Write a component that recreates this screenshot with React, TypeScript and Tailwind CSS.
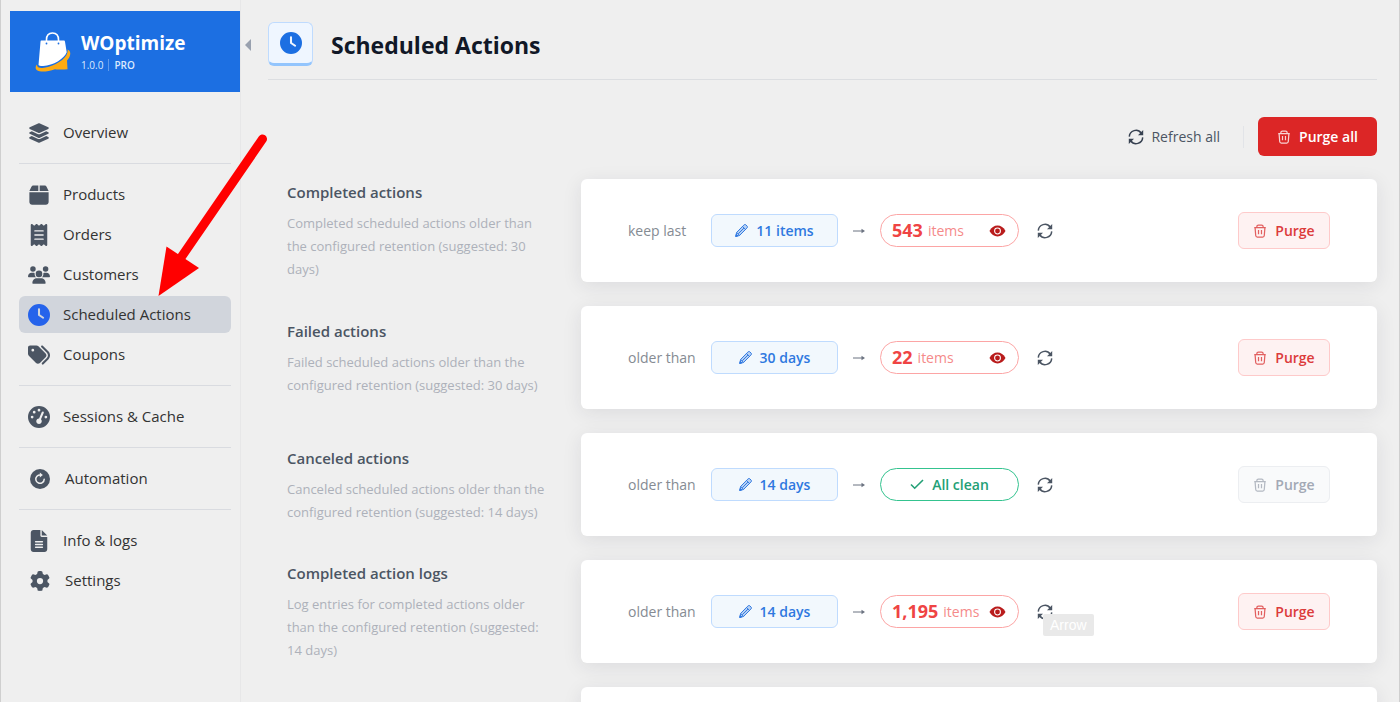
import React from "react";
import { FaBox, FaClock, FaFileLines, FaGaugeHigh, FaGear, FaLayerGroup, FaReceipt, FaTags, FaUsers } from "react-icons/fa6";

type IconProps = { className?: string };

function RefreshIcon({ className }: IconProps) {
  return (
    <svg viewBox="0 0 16 16" fill="none" stroke="currentColor" strokeWidth="1.5" className={className} aria-hidden="true">
      <path d="M1.3 7.6A6.600 6.600 0 0 1 13.300 4.200M14.700 8.400A6.600 6.600 0 0 1 2.700 11.800" />
      <path d="M15.200 1v5.200H10zM.8 15V9.800H6z" fill="currentColor" stroke="none" />
    </svg>
  );
}

function TrashIcon({ className }: IconProps) {
  return (
    <svg viewBox="0 0 16 16" fill="none" stroke="currentColor" strokeWidth="1.4" strokeLinejoin="round" className={className} aria-hidden="true">
      <path d="M1.4 4.2h13.2M4.400 4V3C4.400 2 5.200 1.300 6.200 1.300h3.600c1 0 1.800.7 1.800 1.700v1M2.400 4.400l.7 8.800c.1 1 .8 1.700 1.800 1.700h6.200c1 0 1.700-.7 1.800-1.700l.7-8.800M6.300 6.800v5M9.700 6.800v5" />
    </svg>
  );
}

function PencilIcon({ className }: IconProps) {
  return (
    <svg viewBox="0 0 16 16" fill="none" stroke="currentColor" strokeWidth="1.2" strokeLinejoin="round" className={className} aria-hidden="true">
      <path d="M10 2.200 11.400.9c.6-.5 1.400-.4 1.900.1l1.700 1.700c.5.5.5 1.300 0 1.900l-1.300 1.400-8.200 8.200L.9 15.300 2 10.400z" fill="currentColor" fillOpacity="0.3" />
      <path d="m9.200 3 3.900 3.900M2.100 10.400l3.500 3.700M11 5 4 12" />
      <path d="m.9 15.300.7-2.600 1.900 1.900z" fill="currentColor" />
    </svg>
  );
}

function EyeIcon({ className }: IconProps) {
  return (
    <svg viewBox="0 0 18 12" className={className} aria-hidden="true">
      <path d="M0.500 6C2.500 2.300 5.500.3 9 .3s6.500 2 8.500 5.700c-2 3.700-5 5.700-8.500 5.700S2.500 9.700.5 6z" fill="currentColor" />
      <circle cx="9" cy="6" r="3.100" fill="none" stroke="#fff" strokeWidth="1.100" />
    </svg>
  );
}

function CheckIcon({ className }: IconProps) {
  return (
    <svg viewBox="0 0 14 14" fill="none" stroke="currentColor" strokeWidth="1.600" className={className} aria-hidden="true">
      <path d="m1 6.500 3.700 3.700L13 2" />
    </svg>
  );
}

function AutomationIcon({ className }: IconProps) {
  return (
    <svg viewBox="0 0 20 20" className={className} aria-hidden="true">
      <circle cx="10" cy="10" r="10" fill="currentColor" />
      <path d="M6.900 7.300a4.200 4.200 0 1 0 7.300 2.900M7 7.200c.8-.8 1.800-1.200 3-1.200" fill="none" stroke="#efefef" strokeWidth="1.500" strokeLinecap="round" />
      <path d="M9.800 3.600 12.900 6 9.800 8.500z" fill="#efefef" />
    </svg>
  );
}

function Logo({ className }: IconProps) {
  return (
    <svg viewBox="0 0 36 40" className={className} aria-hidden="true">
      <path d="M32.500 17.500c4 1.500 3.500 6.500-.5 11l.5 8.700c-4.500.5-9.500.4-12.500 0-7 2.500-14.500 3-17.500 1.300C0 37.500.2 34.500 2 32.500c-.3 2.500 2 3.600 5.500 3.400C15 35.500 27.500 30 31.500 23c1-2 1.500-4 1-5.500z" fill="#fdab13" />
      <path d="M6.300 8.500h22.400c.8 0 1.200.4 1.300 1.200l1.700 10.500c-2.500 6.500-13.500 13.300-23.500 13.800-2.500.1-4-.2-4.700-1l2-23.300c0-.8.300-1.200.8-1.200z" fill="#fff" />
      <path d="M11.500 10.500V7.800C11.500 3.500 14 1 17.500 1S23.500 3.500 23.500 7.800v2.700" fill="none" stroke="#fff" strokeWidth="1.600" />
      <circle cx="11.500" cy="11.500" r=".9" fill="#1c6fe2" />
      <circle cx="23.500" cy="11.500" r=".9" fill="#1c6fe2" />
    </svg>
  );
}

type NavItem = { label: string; icon: React.ComponentType<IconProps>; small?: boolean; active?: boolean };

const navGroups: NavItem[][] = [
  [{ label: "Overview", icon: FaLayerGroup }],
  [
    { label: "Products", icon: FaBox },
    { label: "Orders", icon: FaReceipt },
    { label: "Customers", icon: FaUsers },
    { label: "Scheduled Actions", icon: FaClock, active: true },
    { label: "Coupons", icon: FaTags },
  ],
  [{ label: "Sessions & Cache", icon: FaGaugeHigh }],
  [{ label: "Automation", icon: AutomationIcon, small: true }],
  [
    { label: "Info & logs", icon: FaFileLines },
    { label: "Settings", icon: FaGear, small: true },
  ],
];

function Sidebar() {
  return (
    <aside className="relative w-[240px] shrink-0 border-r border-[#e7e7e8] pt-[11px]">
      <div className="ml-[9px] flex h-[81px] items-center bg-[#1c6fe2] pl-[25px] text-white">
        <Logo className="h-10 w-9 shrink-0" />
        <div className="pt-[2px] pl-[10px]">
          <div className="text-[19px] leading-6 font-bold">WOptimize</div>
          <div className="flex items-center text-[10px] leading-5 text-blue-100">
            <span>1.0.0</span>
            <span className="mx-[5px] h-3 w-px bg-white/30" />
            <span className="font-semibold">PRO</span>
          </div>
        </div>
      </div>
      <button type="button" aria-label="Collapse menu" className="absolute top-[39px] -right-[11px] text-gray-400">
        <svg viewBox="0 0 6 12" className="h-3 w-[6px]" aria-hidden="true">
          <path d="M6 0v12L0 6z" fill="currentColor" />
        </svg>
      </button>
      <nav className="mr-[9px] ml-[18px] pt-[22px]">
        {navGroups.map((group, i) => (
          <ul key={i} className={i === 0 ? "flex flex-col gap-[3px]" : "mt-3 flex flex-col gap-[3px] border-t border-[#d9dbe0] pt-3"}>
            {group.map(({ label, icon: Icon, small, active }) => (
              <li key={label}>
                <a
                  href="#"
                  className={
                    active
                      ? "flex h-[37px] items-center rounded-md bg-[#d1d5dc] pl-[9px] text-[15px] text-[#333]"
                      : "flex h-[37px] items-center rounded-md pl-[9px] text-[15px] text-[#333]"
                  }
                >
                  <Icon
                    className={
                      active
                        ? "mr-[13px] size-[22px] text-[#2563eb]"
                        : small
                          ? "mr-[15px] ml-[2px] size-[20px] text-[#4b5563]"
                          : "mr-[13px] size-[22px] text-[#4b5563]"
                    }
                  />
                  {label}
                </a>
              </li>
            ))}
          </ul>
        ))}
      </nav>
    </aside>
  );
}

type Row = { title: string; text: string; rule: string; value: string; count: string | null; tip?: string };

const rows: Row[] = [
  {
    title: "Completed actions",
    text: "Completed scheduled actions older than the configured retention (suggested: 30 days)",
    rule: "keep last",
    value: "11 items",
    count: "543",
  },
  {
    title: "Failed actions",
    text: "Failed scheduled actions older than the configured retention (suggested: 30 days)",
    rule: "older than",
    value: "30 days",
    count: "22",
  },
  {
    title: "Canceled actions",
    text: "Canceled scheduled actions older than the configured retention (suggested: 14 days)",
    rule: "older than",
    value: "14 days",
    count: null,
  },
  {
    title: "Completed action logs",
    text: "Log entries for completed actions older than the configured retention (suggested: 14 days)",
    rule: "older than",
    value: "14 days",
    count: "1,195",
    tip: "Arrow",
  },
];

const cardClass =
  "flex h-[103px] min-w-0 flex-1 items-center rounded-md bg-white pr-[47px] pl-[47px] shadow-[0_4px_20px_rgba(30,35,50,0.09)]";

function ActionRow({ row }: { row: Row }) {
  return (
    <section className="flex items-center">
      <div className="w-[313px] shrink-0 pr-[33px] pl-[19px]">
        <h2 className="text-[15px] leading-6 font-semibold text-[#4b5563]">{row.title}</h2>
        <p className="mt-2 text-[13px] leading-[23px] text-[#adb1ba]">{row.text}</p>
      </div>
      <div className={cardClass}>
        <span className="w-[83px] shrink-0 text-[14px] text-[#858b93]">{row.rule}</span>
        <button
          type="button"
          className="flex h-[33px] w-[127px] shrink-0 items-center justify-center gap-2 rounded-md border border-[#bfdbfe] bg-[#f2f8fd] text-[14px] font-semibold text-[#2f78e0]"
        >
          <PencilIcon className="size-[13px]" />
          {row.value}
        </button>
        <span className="flex w-[42px] shrink-0 justify-center text-[#6b7280]">
          <svg viewBox="0 0 12 6" className="h-[6px] w-3" aria-hidden="true">
            <path d="M0 3h10" stroke="currentColor" />
            <path d="M8.500.8 12 3 8.500 5.200z" fill="currentColor" />
          </svg>
        </span>
        {row.count ? (
          <div className="flex h-[33px] w-[139px] shrink-0 items-center rounded-full border border-[#fca5a5] pr-3 pl-[11px]">
            <span className="text-[18px] font-bold text-[#ef4444]">{row.count}</span>
            <span className="pl-[5px] text-[14px] text-[#f58a8a]">items</span>
            <button type="button" aria-label="View items" className="ml-auto text-[#b91c1c]">
              <EyeIcon className="h-3 w-[17px]" />
            </button>
          </div>
        ) : (
          <div className="flex h-[33px] w-[139px] shrink-0 items-center justify-center gap-2 rounded-full border border-[#34c38f] text-[14px] font-semibold text-[#23a076]">
            <CheckIcon className="size-[14px]" />
            All clean
          </div>
        )}
        <div className="relative ml-[18px] shrink-0">
          <button type="button" aria-label="Refresh" className="block text-[#4b5563]">
            <RefreshIcon className="size-4" />
          </button>
          {row.tip && (
            <span className="absolute top-[10px] left-[6px] rounded-[2px] bg-[#e9e9e9] px-[7px] font-['Liberation_Sans',sans-serif] text-[14px] leading-[22px] text-white">
              {row.tip}
            </span>
          )}
        </div>
        <button
          type="button"
          disabled={!row.count}
          className={
            row.count
              ? "ml-auto flex h-[37px] w-[92px] shrink-0 items-center justify-center gap-2 rounded-md border border-[#fecaca] bg-[#fef2f2] text-[14px] font-semibold text-[#dc3b3b]"
              : "ml-auto flex h-[37px] w-[92px] shrink-0 items-center justify-center gap-2 rounded-md border border-[#eceef1] bg-[#f9fafb] text-[14px] font-semibold text-[#a3a9b5]"
          }
        >
          <TrashIcon className="size-[14px] opacity-80" />
          Purge
        </button>
      </div>
    </section>
  );
}

export default function App() {
  return (
    <div className="relative flex h-screen overflow-hidden border-x border-[#cfcfcf] bg-[#efefef] font-['Open_Sans','Noto_Sans',sans-serif] antialiased">
      <div className="flex w-full">
        <Sidebar />
        <main className="min-w-0 flex-1 pr-[22px] pl-[27px]">
          <header className="flex h-[80px] items-center border-b border-[#dcdee1] pt-[9px]">
            <span className="flex h-[44px] w-[45px] items-center justify-center rounded-md border border-b-[3px] border-[#bfdbfe] border-b-[#93c5fd] bg-[#eff6ff] text-[#1c6fe2]">
              <FaClock className="size-[22px]" />
            </span>
            <h1 className="pt-[2px] pl-[18px] text-[23px] font-bold text-[#111827]">Scheduled Actions</h1>
          </header>
          <div className="flex items-center justify-end pt-[37px] pb-[23px]">
            <button type="button" className="flex items-center gap-[7px] text-[14px] text-[#4b5563]">
              <RefreshIcon className="size-4 text-[#374151]" />
              Refresh all
            </button>
            <span className="mr-[14px] ml-[23px] h-[22px] w-px bg-[#e2e4e8]" />
            <button
              type="button"
              className="flex h-[39px] w-[119px] items-center justify-center gap-2 rounded-md bg-[#dc2626] text-[14px] font-semibold text-white"
            >
              <TrashIcon className="size-[14px] opacity-80" />
              Purge all
            </button>
          </div>
          <div className="flex flex-col gap-6">
            {rows.map((row) => (
              <ActionRow key={row.title} row={row} />
            ))}
            <section className="flex items-center pl-[313px]">
              <div className={cardClass} />
            </section>
          </div>
        </main>
      </div>
      <svg viewBox="0 0 110 164" className="pointer-events-none absolute top-[133px] left-[156px] h-[164px] w-[110px]" aria-hidden="true">
        <path d="M105.500 6 23 126" stroke="#ff0000" strokeWidth="9" strokeLinecap="round" />
        <path d="M9.500 113.500 42 135 1.500 163z" fill="#ff0000" />
      </svg>
    </div>
  );
}
